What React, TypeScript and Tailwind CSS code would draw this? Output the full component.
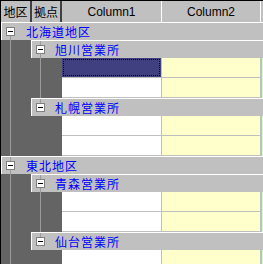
import React from 'react';
import clsx from 'clsx';

type Row =
  | { kind: 'region'; label: string; first?: boolean }
  | { kind: 'branch'; label: string; last?: boolean }
  | { kind: 'data'; branchLine?: boolean; selected?: boolean };

const rows: Row[] = [
  { kind: 'region', label: '北海道地区', first: true },
  { kind: 'branch', label: '旭川営業所' },
  { kind: 'data', branchLine: true, selected: true },
  { kind: 'data', branchLine: true },
  { kind: 'branch', label: '札幌営業所', last: true },
  { kind: 'data' },
  { kind: 'data' },
  { kind: 'region', label: '東北地区' },
  { kind: 'branch', label: '青森営業所' },
  { kind: 'data', branchLine: true },
  { kind: 'data', branchLine: true },
  { kind: 'branch', label: '仙台営業所', last: true },
  { kind: 'data' },
];

const jp = "font-['MS_UI_Gothic','Noto_Sans_CJK_JP',sans-serif]";

function MinusBox() {
  return (
    <div className="flex h-[9px] w-[9px] shrink-0 items-center justify-center border border-[#808080] bg-white">
      <div className="h-px w-[5px] bg-black" />
    </div>
  );
}

// one slot of the tree: a vertical line, with an optional box on it
function TreeSlot({ top, bottom, box }: { top?: boolean; bottom?: boolean; box?: boolean }) {
  return (
    <div className="flex w-[9px] flex-col items-center">
      <div className={clsx('w-px flex-1', top && 'bg-[#9a9a9a]')} />
      {box && <MinusBox />}
      {box && <div className={clsx('w-px flex-1', bottom && 'bg-[#9a9a9a]')} />}
    </div>
  );
}

function DarkCell({ width, line }: { width: string; line?: boolean }) {
  return (
    <div className={clsx('flex h-full bg-[#646464] pl-[5px]', width)}>
      <TreeSlot top={line} />
    </div>
  );
}

function GridRow({ row }: { row: Row }) {
  if (row.kind === 'region') {
    return (
      <div className="flex h-[18px] items-stretch border-t border-l border-white bg-[#c0c0c0] pl-[4px]">
        <TreeSlot box top={!row.first} bottom />
        <span className={clsx('ml-[11px] self-center text-[12px] leading-none tracking-[1px] text-[#0000ff]', jp)}>
          {row.label}
        </span>
      </div>
    );
  }
  if (row.kind === 'branch') {
    return (
      <div className="flex h-[18px]">
        <DarkCell width="w-[30px]" line />
        <div className="flex flex-1 border-t border-l border-white bg-[#c0c0c0] pl-[4px]">
          <TreeSlot box top bottom={!row.last} />
          <span className={clsx('ml-[10px] self-center text-[12px] leading-none tracking-[1px] text-[#0000ff]', jp)}>
            {row.label}
          </span>
        </div>
      </div>
    );
  }
  return (
    <div className="flex h-[20px]">
      <DarkCell width="w-[30px]" line />
      <DarkCell width="w-[31px]" line={row.branchLine} />
      <div className="w-[100px] border-r border-b border-[#c0c0c0] bg-white">
        {row.selected && (
          <div className="h-full bg-[#404080] p-px">
            <div className="h-full border border-dotted border-black" />
          </div>
        )}
      </div>
      <div className="w-[100px] border-r-2 border-b border-[#c0c0c0] bg-[#ffffcc]" />
      <div className="flex-1 bg-[#ccffcc]" />
    </div>
  );
}

export default function App() {
  return (
    <div className="flex h-[264px] w-[263px] flex-col overflow-hidden border-t border-l border-black bg-[#646464]">
      <div className="flex h-[21px] shrink-0 bg-[#c0c0c0] text-[12px] text-black">
        <div className={clsx('flex w-[29px] items-center justify-center', jp)}>地区</div>
        <div className="w-[2px] bg-[#404040]" />
        <div className={clsx('flex w-[28px] items-center justify-center', jp)}>拠点</div>
        <div className="w-[2px] bg-[#404040]" />
        <div className="flex w-[99px] items-center justify-center font-['Liberation_Sans',sans-serif]">Column1</div>
        <div className="w-px bg-white" />
        <div className="flex w-[98px] items-center justify-center font-['Liberation_Sans',sans-serif]">Column2</div>
        <div className="w-px bg-white" />
        <div className="flex-1" />
      </div>
      {rows.map((row, i) => (
        <div key={i} className="shrink-0">
          <GridRow row={row} />
        </div>
      ))}
    </div>
  );
}
